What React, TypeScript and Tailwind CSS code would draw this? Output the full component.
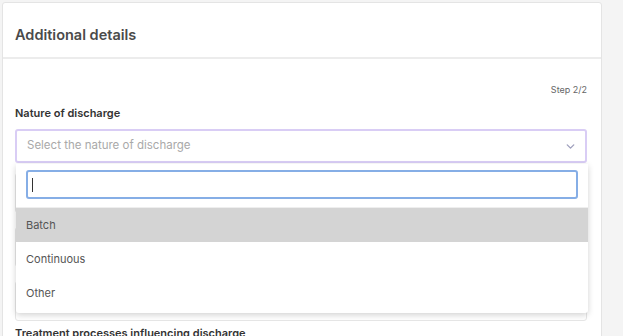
import { ChevronDown } from 'lucide-react';

const options = ['Batch', 'Continuous', 'Other'];

export default function App() {
  return (
    <div
      className="h-[336px] w-full overflow-hidden bg-[#f4f4f4] pl-[2px] pt-[2px]"
      style={{ fontFamily: 'Inter, "Noto Sans", sans-serif' }}
    >
      <div className="w-[600px] rounded-[3px] border border-[#e4e4e4] bg-white">
        {/* Header */}
        <div className="h-[56px] border-b-2 border-[#ececec] px-[12px] pt-[23px]">
          <h2 className="text-[14.5px] font-semibold leading-[18px] text-[#4a4a4a]">Additional details</h2>
        </div>

        {/* Body */}
        <div className="pl-[12px] pr-[14px] pt-[25px]">
          <div className="text-right text-[9px] leading-[12px] text-[#666]">Step 2/2</div>
          <label className="mt-[10px] block text-[11px] font-semibold leading-[14px] text-[#333]">
            Nature of discharge
          </label>

          <div className="relative mt-[9px]">
            <div className="flex h-[34px] items-center justify-between rounded-[3px] border-2 border-[#d9cdf5] pl-[10px] pr-[8px]">
              <span className="text-[11.5px] text-[#a9a9a9]">Select the nature of discharge</span>
              <ChevronDown className="h-[13px] w-[13px] text-[#9fa0bd]" strokeWidth={2.5} />
            </div>

            {/* Dropdown */}
            <div className="absolute left-[1px] right-[-1px] top-[35px] z-10 rounded-b-[3px] bg-white pb-[3px] shadow-[0_2px_6px_rgba(0,0,0,0.18)]">
              <div className="border-b border-[#eeeeee] px-[10px] pb-[8px] pt-[6px]">
                <div className="flex h-[29px] items-center rounded-[3px] border-2 border-[#86aee6] px-[4px]">
                  <span className="h-[14px] w-px bg-[#333]" />
                </div>
              </div>
              {options.map((o, i) => (
                <div
                  key={o}
                  className={`flex h-[34px] items-center px-[10px] text-[11px] text-[#555] ${i === 0 ? 'bg-[#d4d4d4]' : ''}`}
                >
                  {o}
                </div>
              ))}
            </div>
          </div>

          {/* Fields hidden under the dropdown */}
          <div className="mt-[10px] space-y-[14px]">
            <div className="h-[40px] rounded-[3px] border border-[#e6e6e6]" />
            <div className="h-[40px] rounded-[3px] border border-[#e6e6e6]" />
            <div className="h-[40px] rounded-[3px] border border-[#e6e6e6]" />
          </div>

          <label className="mt-[5px] block text-[11px] font-semibold leading-[14px] text-[#333]">
            Treatment processes influencing discharge
          </label>
        </div>
      </div>
    </div>
  );
}
